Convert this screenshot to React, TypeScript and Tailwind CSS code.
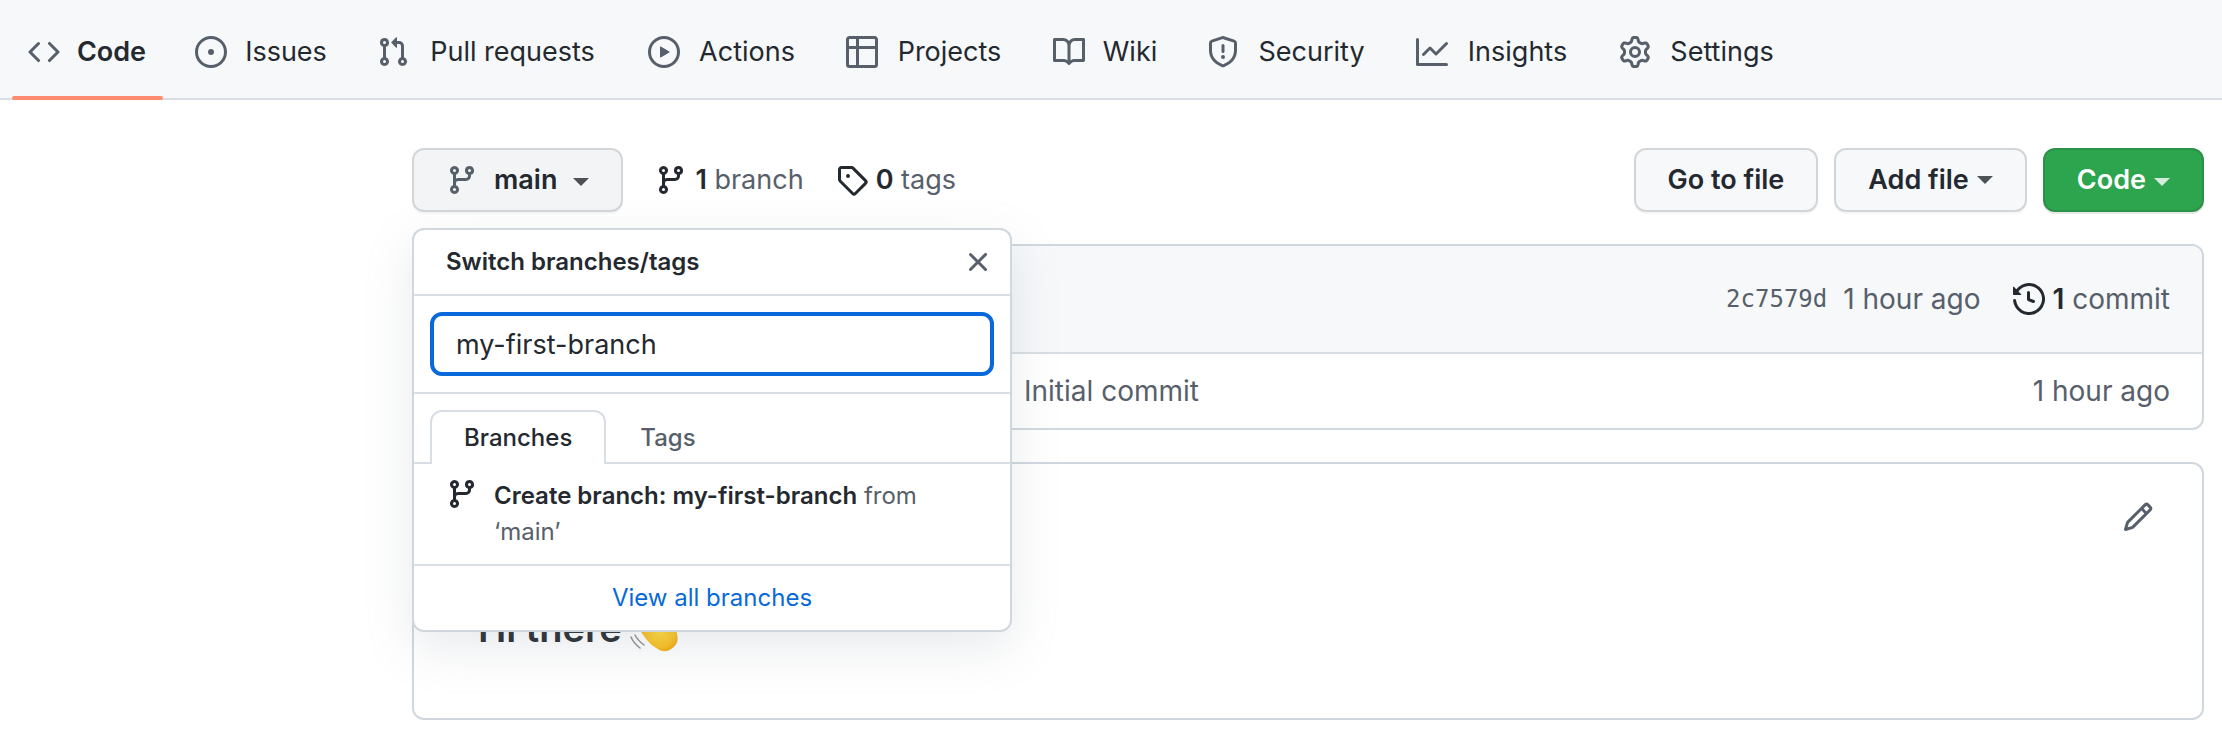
import type { ReactNode } from "react";

const paths = {
  code: "M4.72 3.22a.75.75 0 011.06 1.06L2.06 8l3.72 3.72a.75.75 0 11-1.06 1.06L.47 8.53a.75.75 0 010-1.06l4.25-4.25zm6.56 0a.75.75 0 10-1.06 1.06L13.94 8l-3.72 3.72a.75.75 0 101.06 1.06l4.25-4.25a.75.75 0 000-1.06l-4.25-4.25z",
  issue: "M8 9.5a1.5 1.5 0 100-3 1.5 1.5 0 000 3zM8 0a8 8 0 100 16A8 8 0 008 0zM1.5 8a6.5 6.5 0 1113 0 6.5 6.5 0 01-13 0z",
  pull: "M7.177 3.073L9.573.677A.25.25 0 0110 .854v4.792a.25.25 0 01-.427.177L7.177 3.427a.25.25 0 010-.354zM3.75 2.5a.75.75 0 100 1.5.75.75 0 000-1.5zm-2.25.75a2.25 2.25 0 113 2.122v5.256a2.251 2.251 0 11-1.5 0V5.372A2.25 2.25 0 011.5 3.25zM11 2.5h-1V4h1a1 1 0 011 1v5.628a2.251 2.251 0 101.5 0V5A2.5 2.5 0 0011 2.5zm1 10.25a.75.75 0 111.5 0 .75.75 0 01-1.5 0zM3.75 12a.75.75 0 100 1.5.75.75 0 000-1.5z",
  play: "M1.5 8a6.5 6.5 0 1113 0 6.5 6.5 0 01-13 0zM8 0a8 8 0 100 16A8 8 0 008 0zM6.379 5.227A.25.25 0 006 5.442v5.117a.25.25 0 00.379.214l4.264-2.559a.25.25 0 000-.428L6.379 5.227z",
  table: "M0 1.75C0 .784.784 0 1.75 0h12.5C15.216 0 16 .784 16 1.75v12.5A1.75 1.75 0 0114.25 16H1.75A1.75 1.75 0 010 14.25V1.75zM1.5 6.5v7.75c0 .138.112.25.25.25H5v-8H1.5zM5 5H1.5V1.75a.25.25 0 01.25-.25H5V5zm1.5 1.5v8h7.75a.25.25 0 00.25-.25V6.5h-8zm8-1.5h-8V1.5h7.75a.25.25 0 01.25.25V5z",
  book: "M0 1.75A.75.75 0 01.75 1h4.253c1.227 0 2.317.59 3 1.501A3.744 3.744 0 0111.006 1h4.245a.75.75 0 01.75.75v10.5a.75.75 0 01-.75.75h-4.507a2.25 2.25 0 00-1.591.659l-.622.621a.75.75 0 01-1.06 0l-.622-.621A2.25 2.25 0 005.258 13H.75a.75.75 0 01-.75-.75V1.75zm8.755 3a2.25 2.25 0 012.25-2.25H14.5v9h-3.757c-.71 0-1.4.201-1.992.572l.004-7.322zm-1.504 7.324l.004-5.073-.002-2.253A2.25 2.25 0 005.003 2.5H1.5v9h3.757a3.75 3.75 0 011.994.574z",
  shield: "M7.467.133a1.75 1.75 0 011.066 0l5.25 1.68A1.75 1.75 0 0115 3.48V7c0 1.566-.32 3.182-1.303 4.682-.983 1.498-2.585 2.813-5.032 3.855a1.7 1.7 0 01-1.33 0c-2.447-1.042-4.049-2.357-5.032-3.855C1.32 10.182 1 8.566 1 7V3.48a1.75 1.75 0 011.217-1.667l5.25-1.68zm.61 1.429a.25.25 0 00-.153 0l-5.25 1.68a.25.25 0 00-.174.238V7c0 1.358.275 2.666 1.057 3.86.784 1.194 2.121 2.34 4.366 3.297a.2.2 0 00.154 0c2.245-.956 3.582-2.104 4.366-3.298C13.225 9.666 13.5 8.36 13.5 7V3.48a.25.25 0 00-.174-.237l-5.25-1.68zM9 10.5a1 1 0 11-2 0 1 1 0 012 0zm-.25-5.75a.75.75 0 10-1.5 0v3a.75.75 0 001.5 0v-3z",
  graph: "M1.5 1.75a.75.75 0 00-1.5 0v12.5c0 .414.336.75.75.75h14.5a.75.75 0 000-1.5H1.5V1.75zm14.28 2.53a.75.75 0 00-1.06-1.06L10 7.94 7.53 5.47a.75.75 0 00-1.06 0L3.22 8.72a.75.75 0 001.06 1.06L7 7.06l2.47 2.47a.75.75 0 001.06 0l5.25-5.25z",
  gear: "M7.429 1.525a6.593 6.593 0 011.142 0c.036.003.108.036.137.146l.289 1.105c.147.56.55.967.997 1.189.174.086.341.183.501.29.417.278.97.423 1.53.27l1.102-.303c.11-.03.175.016.195.046.219.31.41.641.573.989.014.031.022.11-.059.19l-.815.806c-.411.406-.562.957-.53 1.456a4.588 4.588 0 010 .582c-.032.499.119 1.05.53 1.456l.815.806c.08.08.073.159.059.19a6.494 6.494 0 01-.573.99c-.02.029-.086.074-.195.045l-1.103-.303c-.559-.153-1.112-.008-1.529.27-.16.107-.327.204-.5.29-.449.222-.851.628-.998 1.189l-.289 1.105c-.029.11-.101.143-.137.146a6.613 6.613 0 01-1.142 0c-.036-.003-.108-.037-.137-.146l-.289-1.105c-.147-.56-.55-.967-.997-1.189a4.502 4.502 0 01-.501-.29c-.417-.278-.97-.423-1.53-.27l-1.102.303c-.11.03-.175-.016-.195-.046a6.492 6.492 0 01-.573-.989c-.014-.031-.022-.11.059-.19l.815-.806c.411-.406.562-.957.53-1.456a4.587 4.587 0 010-.582c.032-.499-.119-1.05-.53-1.456l-.815-.806c-.08-.08-.073-.159-.059-.19a6.44 6.44 0 01.573-.99c.02-.029.086-.075.195-.045l1.103.303c.559.153 1.112.008 1.529-.27.16-.107.327-.204.5-.29.449-.222.851-.628.998-1.189l.289-1.105c.029-.11.101-.143.137-.146zM8 0c-.236 0-.47.01-.701.03-.743.065-1.29.615-1.458 1.261l-.29 1.106c-.017.066-.078.158-.211.224a5.994 5.994 0 00-.668.386c-.123.082-.233.09-.3.071L3.27 2.776c-.644-.177-1.392.02-1.82.63a7.977 7.977 0 00-.704 1.217c-.315.675-.111 1.422.363 1.891l.815.806c.05.048.098.147.088.294a6.084 6.084 0 000 .772c.01.147-.038.246-.088.294l-.815.806c-.474.469-.678 1.216-.363 1.891.2.428.436.835.704 1.218.428.609 1.176.806 1.82.63l1.103-.303c.066-.019.176-.011.299.071.213.143.436.272.668.386.133.066.194.158.212.224l.289 1.106c.169.646.715 1.196 1.458 1.26a8.094 8.094 0 001.402 0c.743-.064 1.29-.614 1.458-1.26l.29-1.106c.017-.066.078-.158.211-.224a5.98 5.98 0 00.668-.386c.123-.082.233-.09.3-.071l1.102.302c.644.177 1.392-.02 1.82-.63.268-.382.505-.789.704-1.217.315-.675.111-1.422-.364-1.891l-.814-.806c-.05-.048-.098-.147-.088-.294a6.1 6.1 0 000-.772c-.01-.147.039-.246.088-.294l.814-.806c.475-.469.679-1.216.364-1.891a7.992 7.992 0 00-.704-1.218c-.428-.609-1.176-.806-1.82-.63l-1.103.303c-.066.019-.176.011-.299-.071a5.991 5.991 0 00-.668-.386c-.133-.066-.194-.158-.212-.224L10.16 1.29C9.99.645 9.444.095 8.701.031A8.094 8.094 0 008 0zm1.5 8a1.5 1.5 0 11-3 0 1.5 1.5 0 013 0zM11 8a3 3 0 11-6 0 3 3 0 016 0z",
  branch: "M11.75 2.5a.75.75 0 100 1.5.75.75 0 000-1.5zm-2.25.75a2.25 2.25 0 113 2.122V6A2.5 2.5 0 0110 8.5H6a1 1 0 00-1 1v1.128a2.251 2.251 0 11-1.5 0V5.372a2.25 2.25 0 111.5 0v1.836A2.492 2.492 0 016 7h4a1 1 0 001-1v-.628A2.25 2.25 0 019.5 3.25zM4.25 12a.75.75 0 100 1.5.75.75 0 000-1.5zM3.5 3.25a.75.75 0 111.5 0 .75.75 0 01-1.5 0z",
  tag: "M2.5 7.775V2.75a.25.25 0 01.25-.25h5.025a.25.25 0 01.177.073l6.25 6.25a.25.25 0 010 .354l-5.025 5.025a.25.25 0 01-.354 0l-6.25-6.25a.25.25 0 01-.073-.177zm-1.5 0V2.75C1 1.784 1.784 1 2.75 1h5.025c.464 0 .91.184 1.238.513l6.25 6.25a1.75 1.75 0 010 2.474l-5.026 5.026a1.75 1.75 0 01-2.474 0l-6.25-6.25A1.75 1.75 0 011 7.775zM6 5a1 1 0 100 2 1 1 0 000-2z",
  x: "M3.72 3.72a.75.75 0 011.06 0L8 6.94l3.22-3.22a.75.75 0 111.06 1.06L9.06 8l3.22 3.22a.75.75 0 11-1.06 1.06L8 9.06l-3.22 3.22a.75.75 0 01-1.06-1.06L6.94 8 3.72 4.78a.75.75 0 010-1.06z",
  history: "M1.643 3.143L.427 1.927A.25.25 0 000 2.104V5.75c0 .138.112.25.25.25h3.646a.25.25 0 00.177-.427L2.715 4.215a6.5 6.5 0 11-1.18 4.458.75.75 0 10-1.493.154 8.001 8.001 0 101.6-5.684zM7.75 4a.75.75 0 01.75.75v2.992l2.028.812a.75.75 0 01-.557 1.392l-2.5-1A.75.75 0 017 8.25v-3.5A.75.75 0 017.75 4z",
  pencil: "M11.013 1.427a1.75 1.75 0 012.474 0l1.086 1.086a1.75 1.75 0 010 2.474l-8.61 8.61c-.21.21-.47.364-.756.445l-3.251.93a.75.75 0 01-.927-.928l.929-3.25a1.75 1.75 0 01.445-.758l8.61-8.61zm1.414 1.06a.25.25 0 00-.354 0L10.811 3.75l1.439 1.44 1.263-1.263a.25.25 0 000-.354l-1.086-1.086zM11.189 6.25L9.75 4.81l-6.286 6.287a.25.25 0 00-.064.108l-.558 1.953 1.953-.558a.249.249 0 00.108-.064l6.286-6.286z",
};

function Icon({ name, className = "" }: { name: keyof typeof paths; className?: string }) {
  return (
    <svg viewBox="0 0 16 16" aria-hidden="true" fill="currentColor" fillRule="evenodd" className={`size-8 shrink-0 ${className}`}>
      <path d={paths[name]} />
    </svg>
  );
}

function Caret({ className = "" }: { className?: string }) {
  return (
    <svg viewBox="0 0 16 8" aria-hidden="true" fill="currentColor" className={`h-2 w-4 shrink-0 opacity-80 ${className}`}>
      <path d="M0 0h16L8 8z" />
    </svg>
  );
}

function WavingHand() {
  return (
    <svg viewBox="0 0 48 48" role="img" aria-label="waving hand" className="size-12 shrink-0">
      <defs>
        <radialGradient id="skin" cx="0.6" cy="0.55" r="0.55">
          <stop offset="0" stopColor="#ffdc3d" />
          <stop offset="0.65" stopColor="#fcbf1b" />
          <stop offset="1" stopColor="#e8960c" />
        </radialGradient>
      </defs>
      <path
        d="M9 24 4 17c-2-3 2-5 4-3l7 8L7 10c-2-4 2-6 5-3l10 12-7-12c-2-4 3-6 5-2l9 13-4-9c-1-4 4-5 5-2l8 14c2-6 5-7 7-5 2 3 1 8 2 14 2 7-1 12-6 15-4 3-9 3-13 0C20 41 13 32 9 24z"
        fill="url(#skin)"
      />
      <path d="M1 33c2 5 5 8 9 11M5 31c2 4 5 7 9 10M35 3c4 1 7 4 8 8" fill="none" stroke="#8c8f93" strokeWidth="1.5" strokeLinecap="round" />
    </svg>
  );
}

const tabs: { label: string; icon: ReactNode; width: string; current?: boolean }[] = [
  { label: "Code", icon: <Icon name="code" />, width: "min-w-[71px]", current: true },
  { label: "Issues", icon: <Icon name="issue" />, width: "min-w-[86px]" },
  { label: "Pull requests", icon: <Icon name="pull" />, width: "min-w-[175px]" },
  { label: "Actions", icon: <Icon name="play" />, width: "min-w-[102px]" },
  { label: "Projects", icon: <Icon name="table" />, width: "min-w-[111px]" },
  { label: "Wiki", icon: <Icon name="book" />, width: "min-w-[58px]" },
  { label: "Security", icon: <Icon name="shield" />, width: "min-w-[113px]" },
  { label: "Insights", icon: <Icon name="graph" />, width: "min-w-[107px]" },
  { label: "Settings", icon: <Icon name="gear" />, width: "min-w-[110px]" },
];

const buttonBase = "flex h-16 items-center rounded-xl border-2 px-8 font-semibold whitespace-nowrap";
const grayButton = `${buttonBase} border-[#d3d6d9] bg-[#f6f8fa] shadow-[0_2px_0_rgba(27,31,36,0.04)]`;

function BranchMenu() {
  return (
    <div
      role="dialog"
      aria-label="Switch branches/tags"
      className="absolute top-20 left-0 z-10 w-[600px] rounded-xl border-2 border-[#d0d7de] bg-white text-2xl leading-9 shadow-[0_16px_48px_rgba(140,149,159,0.2)]"
    >
      <div className="flex h-[66px] items-center justify-between border-b-2 border-[#d8dee4] pr-4 pl-8">
        <h2 className="font-semibold">Switch branches/tags</h2>
        <button type="button" aria-label="Close menu" className="text-[#57606a]">
          <Icon name="x" />
        </button>
      </div>
      <div className="border-b-2 border-[#d8dee4] p-4">
        <input
          type="text"
          aria-label="Find or create a branch"
          defaultValue="my-first-branch"
          className="block h-16 w-full rounded-xl border-4 border-[#0969da] bg-white px-[22px] text-[27px] outline-none"
        />
      </div>
      <div role="tablist" className="flex h-[70px] items-end border-b-2 border-[#d8dee4] pl-4 font-medium">
        <button type="button" role="tab" aria-selected="true" className="-mb-0.5 h-[54px] rounded-t-xl border-2 border-b-0 border-[#d8dee4] bg-white px-8">
          Branches
        </button>
        <button type="button" role="tab" aria-selected="false" className="-mb-0.5 h-[54px] border-2 border-b-0 border-transparent px-8 text-[#57606a]">
          Tags
        </button>
      </div>
      <button type="button" className="flex w-full items-start gap-4 border-b-2 border-[#d8dee4] py-[14px] pr-16 pl-8 text-left text-[#57606a]">
        <Icon name="branch" className="text-[#24292f]" />
        <span>
          <span className="font-semibold text-[#24292f]">Create branch: my-first-branch</span> from ‘main’
        </span>
      </button>
      <a href="#branches" className="flex h-16 items-center justify-center text-[#0969da]">
        View all branches
      </a>
    </div>
  );
}

export default function App() {
  return (
    <div className="min-h-screen bg-white font-['Inter','Liberation_Sans',sans-serif] text-[27px] leading-10 text-[#24292f]">
      <nav aria-label="Repository" className="flex h-[100px] gap-4 border-b-2 border-[#d8dee4] bg-[#f6f8fa] px-3">
        {tabs.map((t) => (
          <a
            key={t.label}
            href={`#${t.label.toLowerCase().replace(" ", "-")}`}
            aria-current={t.current ? "page" : undefined}
            className={`relative flex items-center gap-4 px-4 pt-1.5 whitespace-nowrap ${t.current ? "font-semibold" : ""}`}
          >
            <span className="text-[#57606a]">{t.icon}</span>
            <span className={`text-center ${t.width}`}>{t.label}</span>
            {t.current && <span className="absolute inset-x-0 -bottom-0.5 h-1 rounded-full bg-[#fd8c73]" />}
          </a>
        ))}
      </nav>

      <main className="pt-12 pr-[18px] pl-[412px]">
        <div className="flex items-center justify-between">
          <div className="flex items-center">
            <div className="relative">
              <button type="button" aria-expanded="true" className={`${buttonBase} border-[#d3d6d9] bg-[#f3f4f6] shadow-[0_2px_0_rgba(27,31,36,0.04)]`}>
                <Icon name="branch" className="mr-4 text-[#57606a]" />
                main
                <Caret className="mt-1 ml-4" />
              </button>
              <BranchMenu />
            </div>
            <a href="#branches" className="ml-8 flex items-center gap-2">
              <Icon name="branch" />
              <span className="text-[#57606a]">
                <strong className="font-semibold text-[#24292f]">1</strong> branch
              </span>
            </a>
            <a href="#tags" className="ml-8 flex items-center gap-2">
              <Icon name="tag" />
              <span className="text-[#57606a]">
                <strong className="font-semibold text-[#24292f]">0</strong> tags
              </span>
            </a>
          </div>
          <div className="flex gap-4">
            <button type="button" className={grayButton}>Go to file</button>
            <button type="button" className={grayButton}>
              Add file
              <Caret className="ml-2" />
            </button>
            <button type="button" className={`${buttonBase} border-[#2a9147] bg-[#2da44e] text-white shadow-[0_2px_0_rgba(27,31,36,0.1)]`}>
              Code
              <Caret className="mt-1 ml-2" />
            </button>
          </div>
        </div>

        <section aria-label="Files" className="mt-8 overflow-hidden rounded-xl border-2 border-[#d0d7de] text-[28px] text-[#57606a]">
          <div className="flex h-[108px] items-center justify-end border-b-2 border-[#d8dee4] bg-[#f6f8fa] px-8">
            <a href="#commit" className="font-['DejaVu_Sans_Mono','Liberation_Mono',monospace] text-2xl">2c7579d</a>
            <span className="ml-4">1 hour ago</span>
            <a href="#commits" className="ml-8 flex items-center gap-2">
              <Icon name="history" className="text-[#24292f]" />
              <span>
                <strong className="font-semibold text-[#24292f]">1</strong> commit
              </span>
            </a>
          </div>
          <div className="flex h-[74px] items-center justify-between pr-8 pl-[610px]">
            <a href="#initial-commit">Initial commit</a>
            <span>1 hour ago</span>
          </div>
        </section>

        <section aria-label="Readme" className="mt-8 h-[258px] rounded-xl border-2 border-[#d0d7de]">
          <div className="flex justify-end pt-[37px] pr-12">
            <button type="button" aria-label="Edit readme" className="text-[#57606a]">
              <Icon name="pencil" />
            </button>
          </div>
          <h3 className="mt-[70px] flex items-center gap-2 pl-16 text-[38px] leading-[50px] font-semibold">
            Hi there <WavingHand />
          </h3>
        </section>
      </main>
    </div>
  );
}
